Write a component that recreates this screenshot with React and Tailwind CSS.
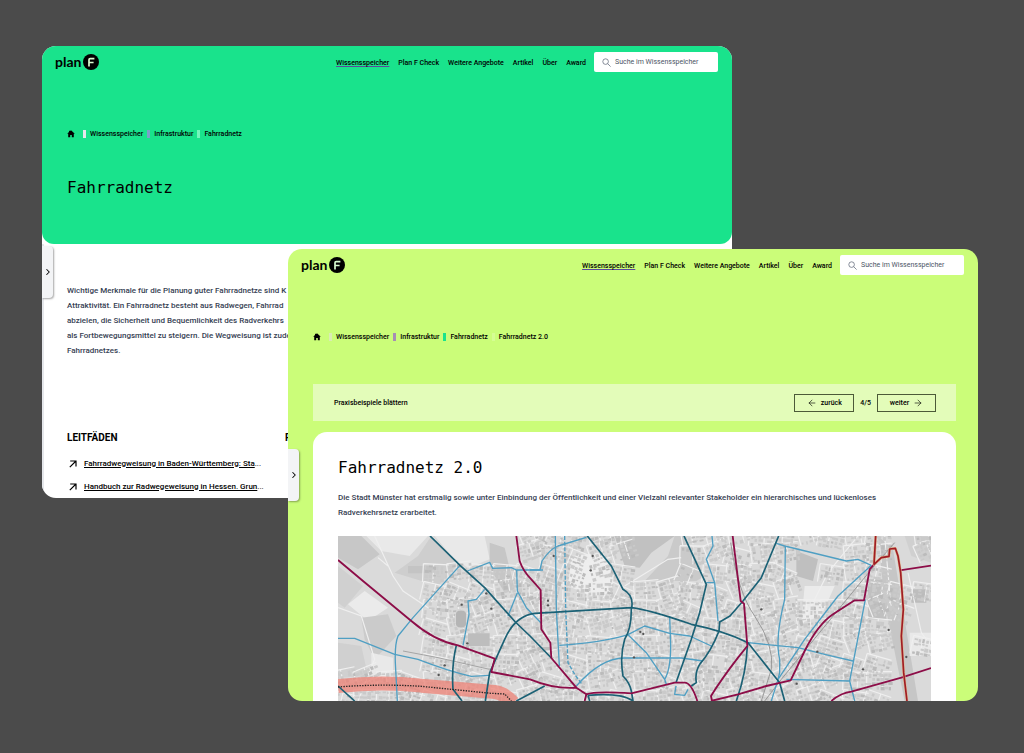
import React from "react";
import { ArrowLeft, ArrowRight, ChevronRight } from "lucide-react";

const navItems = ["Plan F Check", "Weitere Angebote", "Artikel", "Über", "Award"];

const Logo = () => (
  <a href="#start" className="flex items-center gap-0.5 font-['Lato',sans-serif] font-bold text-[14px] leading-4 text-black">
    <span>plan</span>
    <svg viewBox="0 0 16 16" className="w-4 h-4" aria-label="F">
      <circle cx="8" cy="8" r="8" fill="#000" />
      <path d="M6 12.4V5.8Q6 4.6 7.2 4.6H11.4M6 8.5H10.6" fill="none" stroke="#d9fbd0" strokeWidth="1.7" />
    </svg>
  </a>
);

const HomeIcon = () => (
  <svg viewBox="0 0 8 8" className="w-2 h-2">
    <path d="M4 .2 7.8 3.7H6.8V7.3H4.8V5H3.2V7.3H1.2V3.7H.2L2 2V.7H2.8V1.3Z" />
  </svg>
);

const SearchIcon = () => (
  <svg viewBox="0 0 9 9" className="w-[9px] h-[9px] shrink-0 text-gray-500" fill="none" stroke="currentColor" strokeWidth="0.8">
    <circle cx="3.6" cy="3.6" r="2.8" />
    <path d="M5.6 5.6 8.6 8.6" />
  </svg>
);

const LinkArrow = () => (
  <svg viewBox="0 0 8 8" className="w-2 h-2 shrink-0" fill="none" stroke="currentColor" strokeWidth="1.2">
    <path d="M1.2 1H7V6.6M7 1 .8 7.2" />
  </svg>
);

const TopBar = ({ id }) => (
  <header className="flex items-center justify-between pt-1.5 pl-[13px] pr-[14px]">
    <Logo />
    <div className="flex items-center gap-2">
      <nav className="flex items-center gap-[9px] pt-0.5 text-[7px] leading-[10px] font-medium text-black">
        <a href="#wissen" className="underline decoration-[#5b4a9c] decoration-1 underline-offset-1">Wissensspeicher</a>
        {navItems.map((item) => (
          <a key={item} href={`#${item}`}>{item}</a>
        ))}
      </nav>
      <label htmlFor={id} className="flex items-center gap-1 w-[124px] h-5 pl-2 bg-white rounded-xs">
        <SearchIcon />
        <input
          id={id}
          type="text"
          aria-label="Suche"
          placeholder="Suche im Wissensspeicher"
          className="min-w-0 flex-1 text-[7px] leading-[10px] bg-transparent outline-none placeholder-gray-600"
        />
      </label>
    </div>
  </header>
);

const Breadcrumb = ({ items }) => (
  <nav className="flex items-center h-4 mt-[54px] pl-[25px] gap-1 text-[7px] leading-[10px] font-medium text-black">
    <a href="#home" aria-label="Home" className="mr-1"><HomeIcon /></a>
    {items.map((item) => (
      <React.Fragment key={item.label}>
        <span className={`w-[3px] h-2 ${item.bar}`} />
        <a href={`#${item.label}`}>{item.label}</a>
      </React.Fragment>
    ))}
  </nav>
);

const SideTab = () => (
  <button
    aria-label="Menü öffnen"
    className="absolute left-0 top-[200px] w-[11px] h-[52px] flex items-center justify-center bg-gray-100 rounded-r-sm shadow-[1px_1px_2px_rgba(0,0,0,0.35)]"
  >
    <ChevronRight className="w-2.5 h-2.5 shrink-0 text-black" strokeWidth={2.5} />
  </button>
);

const guides = [
  "Fahrradwegweisung in Baden-Württemberg: Sta",
  "Handbuch zur Radwegeweisung in Hessen. Grun",
];

/* ---- map ---- */

// small seeded generator so that the map always looks the same
const makeRandom = (seed) => () => {
  seed = (seed * 16807) % 2147483647;
  return seed / 2147483647;
};

const buildTexture = () => {
  const rnd = makeRandom(4711);
  const houses = [];
  const streets = [];
  for (let by = -20; by < 500; by += 54) {
    for (let bx = -20; bx < 1800; bx += 70) {
      // open fields in the north west
      if (bx + by * 1.5 < 330 && by < 300) continue;
      if (bx < 210 && by < 400) continue;
      if (bx > 240 && bx < 530 && by < 70) continue;
      if (bx > 830 && bx < 1010 && by < 110) continue;
      if (bx > 1370 && bx < 1480 && by < 230 && rnd() < 0.7) continue;
      if (bx > 1640 && rnd() < 0.55) continue;
      const angle = Math.round(rnd() * 50 - 25);
      const at = `translate(${bx} ${by}) rotate(${angle})`;
      streets.push({ at, d: `M-4 -5H72M-4 -5V50M${Math.round(24 + rnd() * 20)} -5V50` });
      for (let y = 0; y < 44; y += 13) {
        for (let x = 0; x < 62; x += 12) {
          if (rnd() < 0.15) continue;
          houses.push({
            at,
            x: x + Math.round(rnd() * 3),
            y: y + Math.round(rnd() * 3),
            w: 5 + Math.round(rnd() * 8),
            h: 4 + Math.round(rnd() * 8),
            dark: rnd() < 0.25,
          });
        }
      }
    }
  }
  return { houses, streets };
};

const { houses, streets } = buildTexture();

const fields = [
  ["#c7c7c7", "M0 0H70L125 55 60 100 0 65Z"],
  ["#e9e9e9", "M85 0H270L215 60 130 45Z"],
  ["#cecece", "M280 0 360 85 300 150 170 110 240 60Z"],
  ["#d0d0d0", "M0 90 75 150 20 215 0 200Z"],
  ["#ebebeb", "M80 165 150 215 90 255 30 205Z"],
  ["#cbcbcb", "M70 245 150 235 175 300 110 370 80 310Z"],
  ["#d0d0d0", "M0 320 70 330 90 420 0 425Z"],
  ["#e9e9e9", "M100 350 165 365 165 430 100 425Z"],
  ["#c4c4c4", "M210 90H290V112H210Z"],
  ["#e9e9e9", "M290 0H440L455 70 390 95 345 65Z"],
  ["#c6c6c6", "M455 20 500 35 530 160 500 170 455 95Z"],
  ["#eeeeee", "M700 60 790 50 830 105 820 170 760 180 690 150Z"],
  ["#c1c1c1", "M830 0H1010L940 50 905 95 860 90Z"],
  ["#cacaca", "M1010 0H1040L1100 120 1075 135H920L990 60Z"],
  ["#bfbfbf", "M1375 45 1440 70 1425 135 1375 120Z"],
  ["#ebebeb", "M1400 150H1490L1450 240 1390 260Z"],
  ["#c0c0c0", "M1590 130H1645V250H1590Z"],
  ["#c6c6c6", "M1620 0 1665 40 1740 495H1700L1640 200Z"],
  ["#d0d0d0", "M1700 0H1779V80L1720 60Z"],
  ["#bdbdbd", "M1720 160H1765V200H1720Z"],
  ["#e9e9e9", "M1715 290H1779V360H1715Z"],
];

const lightBlue = [
  // west
  "M366 88 225 245 180 300Q170 325 172 380L178 495",
  "M0 307H50L170 355 240 370Q330 405 400 421L455 418",
  "M388 105 455 79 464 97 520 95 535 102 615 102",
  "M440 160 415 190 390 195 393 235 375 328",
  "M536 102 538 165 565 215 610 262M538 170 510 240",
  // centre
  "M576 102H606L612 75Q635 40 660 30L745 4",
  "M652 0 655 220 664 390",
  "M664 328Q790 320 870 296L920 270 995 292 1055 300 1120 330",
  "M870 296 925 350 980 430 985 445M995 240 998 330Q998 400 980 430",
  "M715 450Q790 365 860 366H1030L1095 375",
  "M1122 0 1125 30 1105 70 1130 140 1140 255M1105 140H1130",
  "M1014 450 1010 475 1040 478 1050 460",
  // east
  "M1315 22 1340 30 1525 75 1560 70 1600 88",
  "M1342 30 1340 190Q1310 310 1325 370V410L1320 430",
  "M1230 320 1380 335 1460 355 1545 375",
  "M1600 88 1500 180 1400 310 1320 430 1300 495",
  "M1582 190 1535 435 1550 495M1535 435 1345 430",
];

const darkBlue = [
  "M276 0 366 88 440 155 532 258 576 300 640 366",
  "M442 495 455 410 500 310Q530 240 590 232L880 215Q930 220 1060 265 1160 285 1230 320L1325 440 1340 495",
  "M355 328Q340 390 345 460L372 495M0 450 50 495",
  "M748 0 820 90 855 160Q890 180 880 220 880 280 860 310 845 360 855 420 875 440 880 465L885 495",
  "M1038 0 1105 145 1085 230 1060 310 1014 440",
  "M1322 0 1270 125 1215 195 1176 240 1145 258 1143 285Q1120 345 1085 385 1070 410 1075 440L1060 450",
  "M1228 330Q1225 410 1195 495",
  "M535 495 620 450M750 478Q850 470 885 495M750 478 755 495",
];

const magenta = [
  "M0 72 75 135 220 255Q290 315 360 328L470 368 460 408 576 430Q650 460 715 455L745 475 740 495",
  "M535 0 545 75Q555 105 580 130L608 162 610 280 637 320 640 366 715 455",
  "M745 475Q770 465 880 472L1010 440H1040Q1060 440 1078 495",
  "M1184 0 1208 195 1218 203 1228 330 1200 365Q1150 430 1119 480L1122 495",
  "M1119 495 1200 475 1285 450 1358 433 1400 345Q1440 265 1485 235L1550 193H1578L1595 100 1608 85",
  "M1480 495Q1510 470 1540 467L1690 425 1779 396",
  "M1685 103 1779 89",
];

const dots = [
  [371, 206], [445, 172], [460, 218], [388, 322], [320, 388], [302, 417], [647, 60],
  [764, 60], [758, 103], [630, 194], [630, 208], [907, 288], [916, 294], [888, 364],
  [1270, 220], [1438, 347], [1376, 443], [1575, 400], [1705, 363], [1652, 282],
];

const CityMap = () => (
  <svg viewBox="0 0 1779 495" preserveAspectRatio="xMidYMid slice" className="block w-full h-[165px] mt-4" role="img" aria-label="Radverkehrsnetz">
    <rect width="1779" height="495" fill="#dadada" />
    {fields.map(([fill, d]) => (
      <path key={d} d={d} fill={fill} />
    ))}
    <g fill="none" stroke="#efefef" strokeWidth="3.5">
      {streets.map((s, i) => (
        <path key={i} d={s.d} transform={s.at} />
      ))}
      <path d="M110 0 165 120 195 165 300 235M120 65 150 90M0 215 70 240 110 370 60 495M860 150 990 70 1030 65M1390 270 1470 110 1560 0M1640 0 1660 220M1710 110 1750 290 1779 330" />
    </g>
    {houses.map((h, i) => (
      <rect key={i} x={h.x} y={h.y} width={h.w} height={h.h} transform={h.at} fill={h.dark ? "#bbbbbb" : "#cacaca"} />
    ))}
    {/* stadium and sports grounds */}
    <rect x="352" y="222" width="34" height="54" rx="14" fill="#b5b5b5" stroke="#ddd" strokeWidth="3" />
    <path d="M390 292H455V330H390Z" fill="#bdbdbd" />
    {/* railway */}
    <path d="M1178 20Q1200 170 1250 240 1310 330 1300 400L1270 495M1670 20 1600 100 1330 430 1280 495" fill="none" stroke="#999" strokeWidth="3" />
    <path d="M195 345 300 365 455 400" fill="none" stroke="#a5a5a5" strokeWidth="3" />
    <g fill="none" strokeLinejoin="round">
      <path d="M0 450Q130 435 250 449L470 468Q500 472 525 500" stroke="#ee8275" strokeOpacity="0.75" strokeWidth="42" />
      <g stroke="#4f9fc3" strokeWidth="4">
        {lightBlue.map((d) => <path key={d} d={d} />)}
        <path d="M680 0 683 220 690 380 710 415 730 442" strokeDasharray="12 5" />
      </g>
      <g stroke="#1b6175" strokeWidth="5">
        {darkBlue.map((d) => <path key={d} d={d} />)}
      </g>
      <g stroke="#8d0d48" strokeWidth="5.5">
        {magenta.map((d) => <path key={d} d={d} />)}
      </g>
      <path d="M0 453Q130 443 250 451L460 472 500 474 520 495" stroke="#222" strokeWidth="4" strokeDasharray="4 4" />
      <path d="M1613 0 1608 85 1630 65 1653 61 1655 39 1672 37 1680 60 1688 110 1696 220 1690 300 1697 410 1707 495" stroke="#e2b48c" strokeWidth="8" />
      <path d="M1613 0 1608 85 1630 65 1653 61 1655 39 1672 37 1680 60 1688 110 1696 220 1690 300 1697 410 1707 495" stroke="#9f1d26" strokeWidth="5" />
    </g>
    <g fill="#555">
      {dots.map(([x, y]) => <circle key={`${x}-${y}`} cx={x} cy={y} r="3.5" />)}
    </g>
  </svg>
);

/* ---- windows ---- */

const OverviewWindow = () => (
  <section className="relative mr-[246px] bg-white rounded-[14px] overflow-hidden">
    <div className="bg-[#19e38c] rounded-b-xl pb-11">
      <TopBar id="suche-netz" />
      <Breadcrumb
        items={[
          { label: "Wissensspeicher", bar: "bg-gray-200" },
          { label: "Infrastruktur", bar: "bg-[#7c9fc8]" },
          { label: "Fahrradnetz", bar: "bg-[#74f5bc]" },
        ]}
      />
      <h1 className="mt-[34px] pl-[25px] font-['DejaVu_Sans_Mono',monospace] text-[16px] leading-6 text-black">
        Fahrradnetz
      </h1>
    </div>

    <div className="border-l-2 border-gray-200 pl-[23px] pt-[39px]">
      <p className="text-[8px] leading-[15px] font-medium text-gray-700 whitespace-nowrap">
        Wichtige Merkmale für die Planung guter Fahrradnetze sind K<br />
        Attraktivität. Ein Fahrradnetz besteht aus Radwegen, Fahrrad<br />
        abzielen, die Sicherheit und Bequemlichkeit des Radverkehrs<br />
        als Fortbewegungsmittel zu steigern. Die Wegweisung ist zude<br />
        Fahrradnetzes.
      </p>

      <div className="flex mt-[72px] text-black">
        <div className="w-[218px]">
          <h2 className="text-[10px] leading-4 font-bold">LEITFÄDEN</h2>
          <ul className="mt-1.5">
            {guides.map((guide) => (
              <li key={guide} className="flex items-center gap-[7px] h-[23px] pl-0.5">
                <LinkArrow />
                <span className="text-[8px] leading-[10px] whitespace-nowrap">
                  <a href="#leitfaden" className="font-medium underline">{guide}</a>...
                </span>
              </li>
            ))}
          </ul>
        </div>
        <h2 className="text-[10px] leading-4 font-bold">P</h2>
      </div>
    </div>
    <SideTab />
  </section>
);

const DetailWindow = () => (
  <section className="relative ml-[246px] -mt-[249px] bg-[#cbfd79] rounded-[14px] overflow-hidden">
    <TopBar id="suche-detail" />
    <Breadcrumb
      items={[
        { label: "Wissensspeicher", bar: "bg-[#d9ecb4]" },
        { label: "Infrastruktur", bar: "bg-[#a68fb4]" },
        { label: "Fahrradnetz", bar: "bg-[#19e38c]" },
        { label: "Fahrradnetz 2.0", bar: "bg-[#d5fd93]" },
      ]}
    />

    <div className="pl-[25px] pr-[22px]">
      {/* PAGER */}
      <div className="flex items-center justify-between h-[37px] mt-[39px] pl-[21px] pr-5 bg-[#e3fcb9] text-[7px] leading-[10px] font-medium text-black">
        <span>Praxisbeispiele blättern</span>
        <div className="flex items-center gap-1.5">
          <button className="flex items-center justify-center gap-1 w-[60px] h-[18px] border border-[#4c5a38]">
            <ArrowLeft className="w-2.5 h-2.5" strokeWidth={1.5} />
            zurück
          </button>
          <span>4/5</span>
          <button className="flex items-center justify-center gap-1 w-[59px] h-[18px] border border-[#4c5a38]">
            weiter
            <ArrowRight className="w-2.5 h-2.5" strokeWidth={1.5} />
          </button>
        </div>
      </div>

      {/* CONTENT */}
      <article className="mt-[11px] px-[25px] pt-6 bg-white rounded-t-[14px]">
        <h1 className="font-['DejaVu_Sans_Mono',monospace] text-[16px] leading-6 text-black">Fahrradnetz 2.0</h1>
        <p className="mt-2.5 text-[8px] leading-[15px] font-medium text-gray-700">
          Die Stadt Münster hat erstmalig sowie unter Einbindung der Öffentlichkeit und einer Vielzahl relevanter Stakeholder ein hierarchisches und lückenloses<br />
          Radverkehrsnetz erarbeitet.
        </p>
        <CityMap />
      </article>
    </div>
    <SideTab />
  </section>
);

const App = () => {
  return (
    <main className="min-h-screen bg-[#4b4b4b] pt-[46px] pb-[52px] pl-[42px] pr-[46px] font-['Roboto',sans-serif]">
      <OverviewWindow />
      <DetailWindow />
    </main>
  );
};

export default App;
